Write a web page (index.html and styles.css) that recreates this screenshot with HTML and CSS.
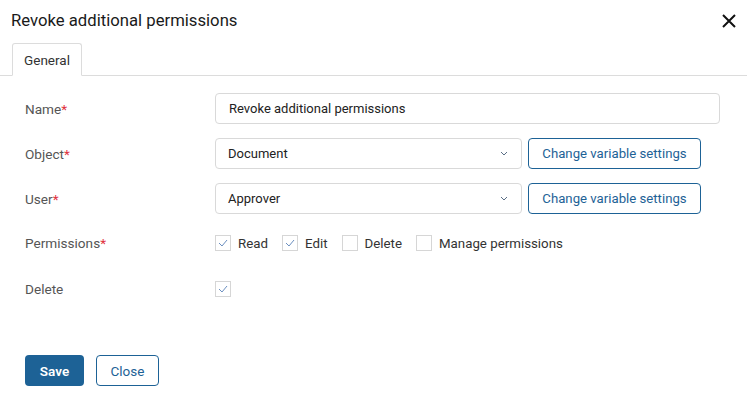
FILE: index.html
```html
<!DOCTYPE html>
<html>
<head>
<meta charset="utf-8">
<link rel="stylesheet" href="styles.css">
</head>
<body>
<div class="dialog">
  <div class="header">
    <h1 class="title">Revoke additional permissions</h1>
    <button class="close-x" aria-label="Close">
      <svg width="16" height="16" viewBox="0 0 16 16"><path d="M2 2L14 14M14 2L2 14" stroke="#111" stroke-width="2" fill="none"/></svg>
    </button>
  </div>
  <div class="tabs">
    <div class="tab">General</div>
  </div>
  <div class="form">
    <div class="row">
      <div class="label">Name<span class="req">*</span></div>
      <div class="field"><div class="input wide">Revoke additional permissions</div></div>
    </div>
    <div class="row">
      <div class="label">Object<span class="req">*</span></div>
      <div class="field">
        <div class="input select">Document<svg class="chev" width="8" height="5" viewBox="0 0 8 5"><path d="M1 1L4 4L7 1" stroke="#5a6f86" stroke-width="1" fill="none"/></svg></div>
        <button class="btn-outline">Change variable settings</button>
      </div>
    </div>
    <div class="row">
      <div class="label">User<span class="req">*</span></div>
      <div class="field">
        <div class="input select">Approver<svg class="chev" width="8" height="5" viewBox="0 0 8 5"><path d="M1 1L4 4L7 1" stroke="#5a6f86" stroke-width="1" fill="none"/></svg></div>
        <button class="btn-outline">Change variable settings</button>
      </div>
    </div>
    <div class="row check-row first-check">
      <div class="label">Permissions<span class="req">*</span></div>
      <div class="field checks">
        <label class="check"><span class="box on"><svg width="10" height="8" viewBox="0 0 10 8"><path d="M1 4L4 7L9 1" stroke="#6b8fc0" stroke-width="1" fill="none"/></svg></span>Read</label>
        <label class="check"><span class="box on"><svg width="10" height="8" viewBox="0 0 10 8"><path d="M1 4L4 7L9 1" stroke="#6b8fc0" stroke-width="1" fill="none"/></svg></span>Edit</label>
        <label class="check"><span class="box"></span>Delete</label>
        <label class="check"><span class="box"></span>Manage permissions</label>
      </div>
    </div>
    <div class="row check-row">
      <div class="label">Delete</div>
      <div class="field checks">
        <span class="box on"><svg width="10" height="8" viewBox="0 0 10 8"><path d="M1 4L4 7L9 1" stroke="#6b8fc0" stroke-width="1" fill="none"/></svg></span>
      </div>
    </div>
  </div>
  <div class="footer">
    <button class="btn-primary">Save</button>
    <button class="btn-outline close-btn">Close</button>
  </div>
</div>
</body>
</html>
```
FILE: styles.css
```css
* { box-sizing: border-box; }
html, body { margin: 0; padding: 0; background: #fff; }
body { font-family: Roboto, "Noto Sans", sans-serif; color: #222; width: 747px; height: 407px; overflow: hidden; }
.dialog { display: flex; flex-direction: column; }
.header { display: flex; align-items: center; justify-content: space-between; height: 43px; padding: 0 10px 0 11px; }
.title { margin: 0; font-size: 16.7px; font-weight: 400; color: #1a1a1a; position: relative; top: -1px; }
.close-x { border: 0; background: none; padding: 0; width: 16px; height: 16px; display: flex; margin-top: -1px; }
.tabs { display: flex; border-bottom: 1px solid #dcdcdc; padding-left: 12px; height: 33px; }
.tab { height: 33px; border: 1px solid #dcdcdc; border-bottom: 1px solid #fff; border-radius: 3px 3px 0 0; font-size: 13.5px; color: #333; display: flex; align-items: center; padding-top: 1px; width: 70px; justify-content: center; }
.form { padding: 17px 26px 0 25px; display: flex; flex-direction: column; }
.row { display: flex; align-items: center; height: 31px; margin-bottom: 14px; }
.check-row { height: 16px; margin-bottom: 30px; }
.first-check { margin-top: 7px; }
.label { width: 190px; font-size: 13.6px; color: #555; }
.req { color: #e0313d; }
.field { display: flex; gap: 6px; flex: 1; }
.input { height: 31px; border: 1px solid #d9d9d9; border-radius: 4px; font-size: 13px; color: #222; display: flex; align-items: center; padding: 0 12px; }
.wide { width: 505px; padding-left: 13px; }
.select { width: 307px; justify-content: space-between; padding-right: 13px; }
.chev { display: block; }
.btn-outline { height: 31px; border: 1px solid #1d6296; border-radius: 4px; background: #fff; color: #1d6296; font-family: inherit; font-size: 13.2px; padding: 0; width: 173px; white-space: nowrap; }
.checks { gap: 0; align-items: center; }
.check { display: flex; align-items: center; font-size: 13.3px; color: #333; margin-right: 14px; }
.box { width: 16px; height: 16px; border: 1px solid #d6d6d6; display: inline-flex; align-items: center; justify-content: center; margin-right: 7px; background: #fff; }
.footer { display: flex; gap: 12px; padding: 0 25px; margin-top: 28px; }
.btn-primary { height: 31px; width: 59px; background: #1d6296; color: #fff; border: 0; border-radius: 4px; font-family: inherit; font-size: 13.5px; font-weight: 600; }
.close-btn { width: 63px; font-size: 13.5px; }
```
